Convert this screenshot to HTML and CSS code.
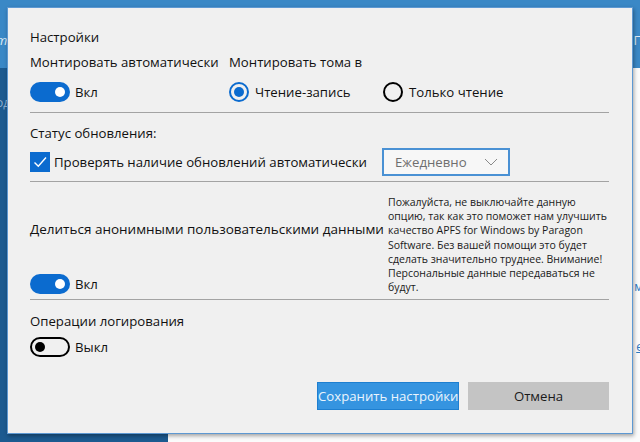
FILE: index.html
```html
<!DOCTYPE html>
<html lang="ru">
<head>
<meta charset="utf-8">
<title>Настройки</title>
<link rel="stylesheet" href="styles.css">
</head>
<body>
<div class="desk">
  <div class="app-header"><span class="frag-top">ти</span><span class="frag-top-r">П</span></div>
  <div class="app-side"><span class="frag-side">од</span></div>
  <div class="app-main"><span class="frag-link1">м</span><span class="frag-link2">е</span></div>

  <div class="dialog">
    <div class="title">Настройки</div>

    <div class="mount">
      <div class="mount-col1">
        <div class="label">Монтировать автоматически</div>
        <div class="ctrl"><span class="toggle on"><span class="knob"></span></span><span>Вкл</span></div>
      </div>
      <div class="mount-col2">
        <div class="label">Монтировать тома в</div>
        <div class="ctrl radios">
          <span class="radio-item"><span class="radio checked"><span class="dot"></span></span>Чтение-запись</span>
          <span class="radio-item"><span class="radio"></span>Только чтение</span>
        </div>
      </div>
    </div>

    <div class="sep"></div>

    <div class="label status">Статус обновления:</div>
    <div class="check-row">
      <span class="checkbox"><svg viewBox="0 0 20 20" width="20" height="20"><polyline points="4.5,10.5 8.3,14.3 16,5.5" fill="none" stroke="#fff" stroke-width="1.4"/></svg></span>
      <span class="check-label">Проверять наличие обновлений автоматически</span>
      <span class="select">Ежедневно<svg class="chev" viewBox="0 0 14 8" width="14" height="8"><polyline points="1,1 7,7 13,1" fill="none" stroke="#8a8a8a" stroke-width="1"/></svg></span>
    </div>

    <div class="sep sep-tight"></div>

    <div class="share">
      <div class="share-left">
        <div class="share-label">Делиться анонимными пользовательскими данными</div>
        <div class="ctrl"><span class="toggle on"><span class="knob"></span></span><span>Вкл</span></div>
      </div>
      <p class="info">Пожалуйста, не выключайте данную опцию, так как это поможет нам улучшить качество APFS for Windows by Paragon Software. Без вашей помощи это будет сделать значительно труднее. Внимание! Персональные данные передаваться не будут.</p>
    </div>

    <div class="sep sep-tight"></div>

    <div class="label log">Операции логирования</div>
    <div class="ctrl log-ctrl"><span class="toggle off"><span class="knob"></span></span><span>Выкл</span></div>

    <div class="buttons">
      <button class="btn primary">Сохранить настройки</button>
      <button class="btn cancel">Отмена</button>
    </div>
  </div>
</div>
</body>
</html>
```

FILE: styles.css
```css
* { box-sizing: border-box; }
html, body { margin: 0; padding: 0; }
body {
  width: 640px;
  height: 442px;
  overflow: hidden;
  font-family: "Open Sans", "Noto Sans", sans-serif;
  color: #111;
}
.desk {
  position: relative;
  width: 640px;
  height: 442px;
  display: grid;
  grid-template-columns: 168px 1fr;
  grid-template-rows: 68px 1fr;
  background: #f9f9f9;
}
.app-header {
  grid-column: 1 / 3;
  background: #3a88c6;
  position: relative;
  color: #dfeaf5;
  font-size: 13px;
}
.app-side {
  background: #1c5a90;
  color: #8fb0cf;
  font-size: 12px;
  position: relative;
}
.app-main { background: #fbfbfb; position: relative; color: #2d78c0; font-size: 12px; }
.frag-top { position: absolute; left: -4px; top: 31px; font-style: italic; }
.frag-top-r { position: absolute; right: -3px; top: 31px; }
.frag-side { position: absolute; left: -4px; top: 26px; }
.frag-link1 { position: absolute; right: -3px; top: 210px; }
.frag-link2 { position: absolute; right: -3px; top: 270px; text-decoration: underline; }

.dialog {
  position: absolute;
  left: 7px;
  top: 7px;
  width: 626px;
  height: 427px;
  background: #f0f0f0;
  border: 1px solid #5d98d2;
  box-shadow: 1px 2px 4px rgba(0,0,0,0.35);
  padding: 19px 23px 0 22px;
  display: flex;
  flex-direction: column;
  font-size: 13.2px;
}
.title { height: 20px; line-height: 20px; }
.label { height: 20px; line-height: 20px; white-space: nowrap; }

.mount { display: flex; margin-top: 5px; }
.mount-col1 { width: 199px; }
.mount-col2 { flex: 1; }
.ctrl { display: flex; align-items: center; height: 20px; margin-top: 10px; gap: 5px; }
.radios { gap: 0; }
.radio-item { display: flex; align-items: center; gap: 6px; width: 154px; }

.toggle {
  width: 40px;
  height: 20px;
  border-radius: 10px;
  display: flex;
  align-items: center;
  padding: 0 5px;
}
.toggle.on { background: #0b6bcf; justify-content: flex-end; }
.toggle.on .knob { width: 10px; height: 10px; border-radius: 50%; background: #fff; }
.toggle.off { border: 2px solid #000; background: transparent; justify-content: flex-start; padding: 0 3px; }
.toggle.off .knob { width: 10px; height: 10px; border-radius: 50%; background: #000; }

.radio {
  width: 20px;
  height: 20px;
  border-radius: 50%;
  border: 2px solid #000;
  display: flex;
  align-items: center;
  justify-content: center;
}
.radio.checked { border-color: #0b6bcf; }
.radio .dot { width: 10px; height: 10px; border-radius: 50%; background: #0b6bcf; }

.sep { height: 1px; background: #a3a3a3; margin-top: 10px; flex: none; }
.sep-tight { margin-top: 5px; }

.status { margin-top: 10px; }
.check-row { display: flex; align-items: center; height: 28px; margin-top: 5px; }
.checkbox { width: 20px; height: 20px; background: #0b6bcf; display: block; }
.checkbox svg { display: block; }
.check-label { margin-left: 4px; white-space: nowrap; width: 328px; }
.select {
  width: 128px;
  height: 28px;
  border: 2px solid #4a91d4;
  background: #f7f7f7;
  color: #6e6e6e;
  display: flex;
  align-items: center;
  justify-content: space-between;
  padding: 0 10px 0 11px;
}
.chev { display: block; }

.share { display: flex; height: 112px; flex: none; }
.share-left { width: 358px; flex: none; display: flex; flex-direction: column; }
.share-label { margin-top: 37px; height: 20px; line-height: 20px; white-space: nowrap; font-size: 13.5px; }
.share-left .ctrl { margin-top: auto; margin-bottom: 0; }
.info {
  flex: none;
  margin: 13px 0 0 0;
  width: 222px;
  font-size: 10.5px;
  line-height: 14.2px;
  color: #1a1a1a;
}

.log { margin-top: 11px; }
.log-ctrl { margin-top: 6px; }

.buttons { display: flex; justify-content: flex-end; gap: 9px; margin-top: 25px; }
.btn {
  height: 28px;
  border: none;
  font-family: inherit;
  font-size: 13.2px;
  padding: 0;
  white-space: nowrap;
}
.btn.primary { width: 142px; background: #3594e0; color: #eaf4fd; border: 1px solid #1e7fd0; }
.btn.cancel { width: 141px; background: #c4c4c4; color: #1a1a1a; }
```
